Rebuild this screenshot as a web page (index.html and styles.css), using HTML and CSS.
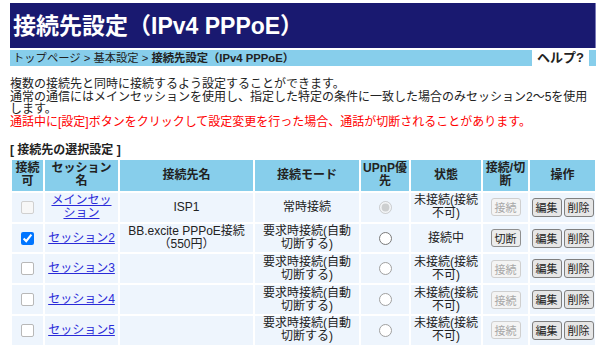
FILE: index.html
```html
<!DOCTYPE html>
<html lang="ja">
<head>
<meta charset="utf-8">
<title>接続先設定（IPv4 PPPoE）</title>
<link rel="stylesheet" href="styles.css">
</head>
<body>
<div class="page">
  <div class="titlebar"><h1 class="title">接続先設定（IPv4 PPPoE）</h1></div>
  <div class="crumbs">
    <div class="trail">トップページ &gt; 基本設定 &gt; <b>接続先設定（IPv4 PPPoE）</b></div>
    <div class="help">ヘルプ?</div>
    <div class="crumbs-end"></div>
  </div>
  <p class="desc">複数の接続先と同時に接続するよう設定することができます。<br>通常の通信にはメインセッションを使用し、指定した特定の条件に一致した場合のみセッション2〜5を使用します。<br><span class="warn">通話中に[設定]ボタンをクリックして設定変更を行った場合、通話が切断されることがあります。</span></p>
  <h2 class="section">[ 接続先の選択設定 ]</h2>
  <table class="sessions">
    <colgroup>
      <col class="c1"><col class="c2"><col class="c3"><col class="c4"><col class="c5"><col class="c6"><col class="c7"><col class="c8">
    </colgroup>
    <thead>
      <tr>
        <th>接続可</th>
        <th>セッション名</th>
        <th>接続先名</th>
        <th>接続モード</th>
        <th>UPnP優先</th>
        <th>状態</th>
        <th>接続/切断</th>
        <th>操作</th>
      </tr>
    </thead>
    <tbody>
      <tr>
        <td><input type="checkbox" class="chk off dis" disabled></td>
        <td><a href="#">メインセッション</a></td>
        <td>ISP1</td>
        <td class="mode">常時接続</td>
        <td><input type="radio" name="upnp" class="rad" checked disabled></td>
        <td class="state">未接続(接続不可)</td>
        <td class="tight"><button class="btn conn" disabled>接続</button></td>
        <td class="tight"><div class="ops"><button class="btn op">編集</button><button class="btn op">削除</button></div></td>
      </tr>
      <tr>
        <td><input type="checkbox" class="chk" checked></td>
        <td><a href="#">セッション2</a></td>
        <td>BB.excite PPPoE接続（550円）</td>
        <td class="mode">要求時接続(自動切断する)</td>
        <td><input type="radio" name="upnp" class="rad off"></td>
        <td class="state">接続中</td>
        <td class="tight"><button class="btn conn">切断</button></td>
        <td class="tight"><div class="ops"><button class="btn op">編集</button><button class="btn op">削除</button></div></td>
      </tr>
      <tr>
        <td><input type="checkbox" class="chk off"></td>
        <td><a href="#">セッション3</a></td>
        <td></td>
        <td class="mode">要求時接続(自動切断する)</td>
        <td><input type="radio" name="upnp" class="rad off lite"></td>
        <td class="state">未接続(接続不可)</td>
        <td class="tight"><button class="btn conn" disabled>接続</button></td>
        <td class="tight"><div class="ops"><button class="btn op">編集</button><button class="btn op">削除</button></div></td>
      </tr>
      <tr>
        <td><input type="checkbox" class="chk off"></td>
        <td><a href="#">セッション4</a></td>
        <td></td>
        <td class="mode">要求時接続(自動切断する)</td>
        <td><input type="radio" name="upnp" class="rad off lite"></td>
        <td class="state">未接続(接続不可)</td>
        <td class="tight"><button class="btn conn" disabled>接続</button></td>
        <td class="tight"><div class="ops"><button class="btn op">編集</button><button class="btn op">削除</button></div></td>
      </tr>
      <tr>
        <td><input type="checkbox" class="chk off"></td>
        <td><a href="#">セッション5</a></td>
        <td></td>
        <td class="mode">要求時接続(自動切断する)</td>
        <td><input type="radio" name="upnp" class="rad off lite"></td>
        <td class="state">未接続(接続不可)</td>
        <td class="tight"><button class="btn conn" disabled>接続</button></td>
        <td class="tight"><div class="ops"><button class="btn op">編集</button><button class="btn op">削除</button></div></td>
      </tr>
    </tbody>
  </table>
</div>
</body>
</html>
```

FILE: styles.css
```css
html, body {
  margin: 0;
  padding: 0;
  background: #ffffff;
}
body {
  font-family: "Liberation Sans", "Noto Sans CJK JP", sans-serif;
  font-size: 12px;
  color: #222222;
}
.page {
  width: 586px;
  margin-left: 10px;
  padding-top: 3px;
}
.titlebar {
  background: #191970;
  height: 45px;
  border-right: 1px solid #7a7ab8;
  box-sizing: border-box;
  display: flex;
  align-items: center;
  padding-left: 3px;
}
.title {
  margin: 0;
  font-size: 23px;
  font-weight: bold;
  color: #ffffff;
  line-height: 26px;
}
.crumbs {
  margin-top: 2px;
  height: 16px;
  display: flex;
  background: #87ceeb;
}
.trail {
  flex: 1;
  font-size: 11.3px;
  line-height: 16px;
  padding-left: 3px;
  color: #222222;
}
.help {
  width: 57px;
  background: #ffffff;
  font-size: 13px;
  font-weight: bold;
  line-height: 16px;
  text-align: center;
  color: #222222;
}
.crumbs-end {
  width: 7px;
}
.desc {
  margin: 12px 0 0 0;
  line-height: 12.7px;
}
.warn {
  color: #ff0000;
}
.section {
  margin: 15px 0 0 0;
  font-size: 12px;
  font-weight: bold;
  line-height: 13px;
}
.sessions {
  margin-top: 1px;
  width: 587px;
  table-layout: fixed;
  border-collapse: separate;
  border-spacing: 2px;
}
.c1 { width: 31px; }
.c2 { width: 73px; }
.c3 { width: 133px; }
.c4 { width: 104px; }
.c5 { width: 48px; }
.c6 { width: 70px; }
.c7 { width: 45px; }
.c8 { width: 65px; }
.sessions th {
  background: #87ceeb;
  font-weight: bold;
  font-size: 12px;
  line-height: 13px;
  height: 27px;
  padding: 2px 1px;
  text-align: center;
  color: #222222;
}
.sessions td {
  background: #eef5fd;
  font-size: 12px;
  line-height: 13px;
  height: 26.8px;
  padding: 1px 2px;
  text-align: center;
  color: #222222;
}
.sessions td.mode {
  padding: 1px 4px;
}
.sessions td.state {
  padding: 1px 3px;
}
.sessions td.tight {
  padding: 1px 0;
}
.sessions a {
  color: #2a2ad8;
  text-decoration: underline;
}
.chk, .rad {
  margin: 0;
  width: 13px;
  height: 13px;
  vertical-align: middle;
}
.chk.off {
  appearance: none;
  box-sizing: border-box;
  border: 1px solid #b8b8b8;
  border-radius: 2px;
  background: #ffffff;
}
.chk.off.dis {
  border-color: #d0d0d0;
  background: #f7f7f7;
}
.rad.off {
  appearance: none;
  box-sizing: border-box;
  border: 1px solid #7a7a7a;
  border-radius: 50%;
  background: #ffffff;
}
.rad.off.lite {
  border-color: #a0a0a0;
}
.btn {
  font-family: "Noto Sans CJK JP", sans-serif;
  font-size: 11px;
  line-height: 13px;
  border-radius: 3px;
  margin: 0;
  color: #222222;
  cursor: pointer;
  flex-shrink: 0;
}
.conn {
  padding: 2px 3px 1px;
  border: 1px solid #8f8f8f;
  background: #ececec;
}
.conn:disabled {
  color: #a8a8a8;
  border-color: #cfcfcf;
  background: #f4f4f4;
}
.op {
  padding: 2px 3px;
  border: 1px solid #7f7f7f;
  background: #e6e6e6;
}
.ops {
  display: flex;
  justify-content: center;
  gap: 2px;
}
```
